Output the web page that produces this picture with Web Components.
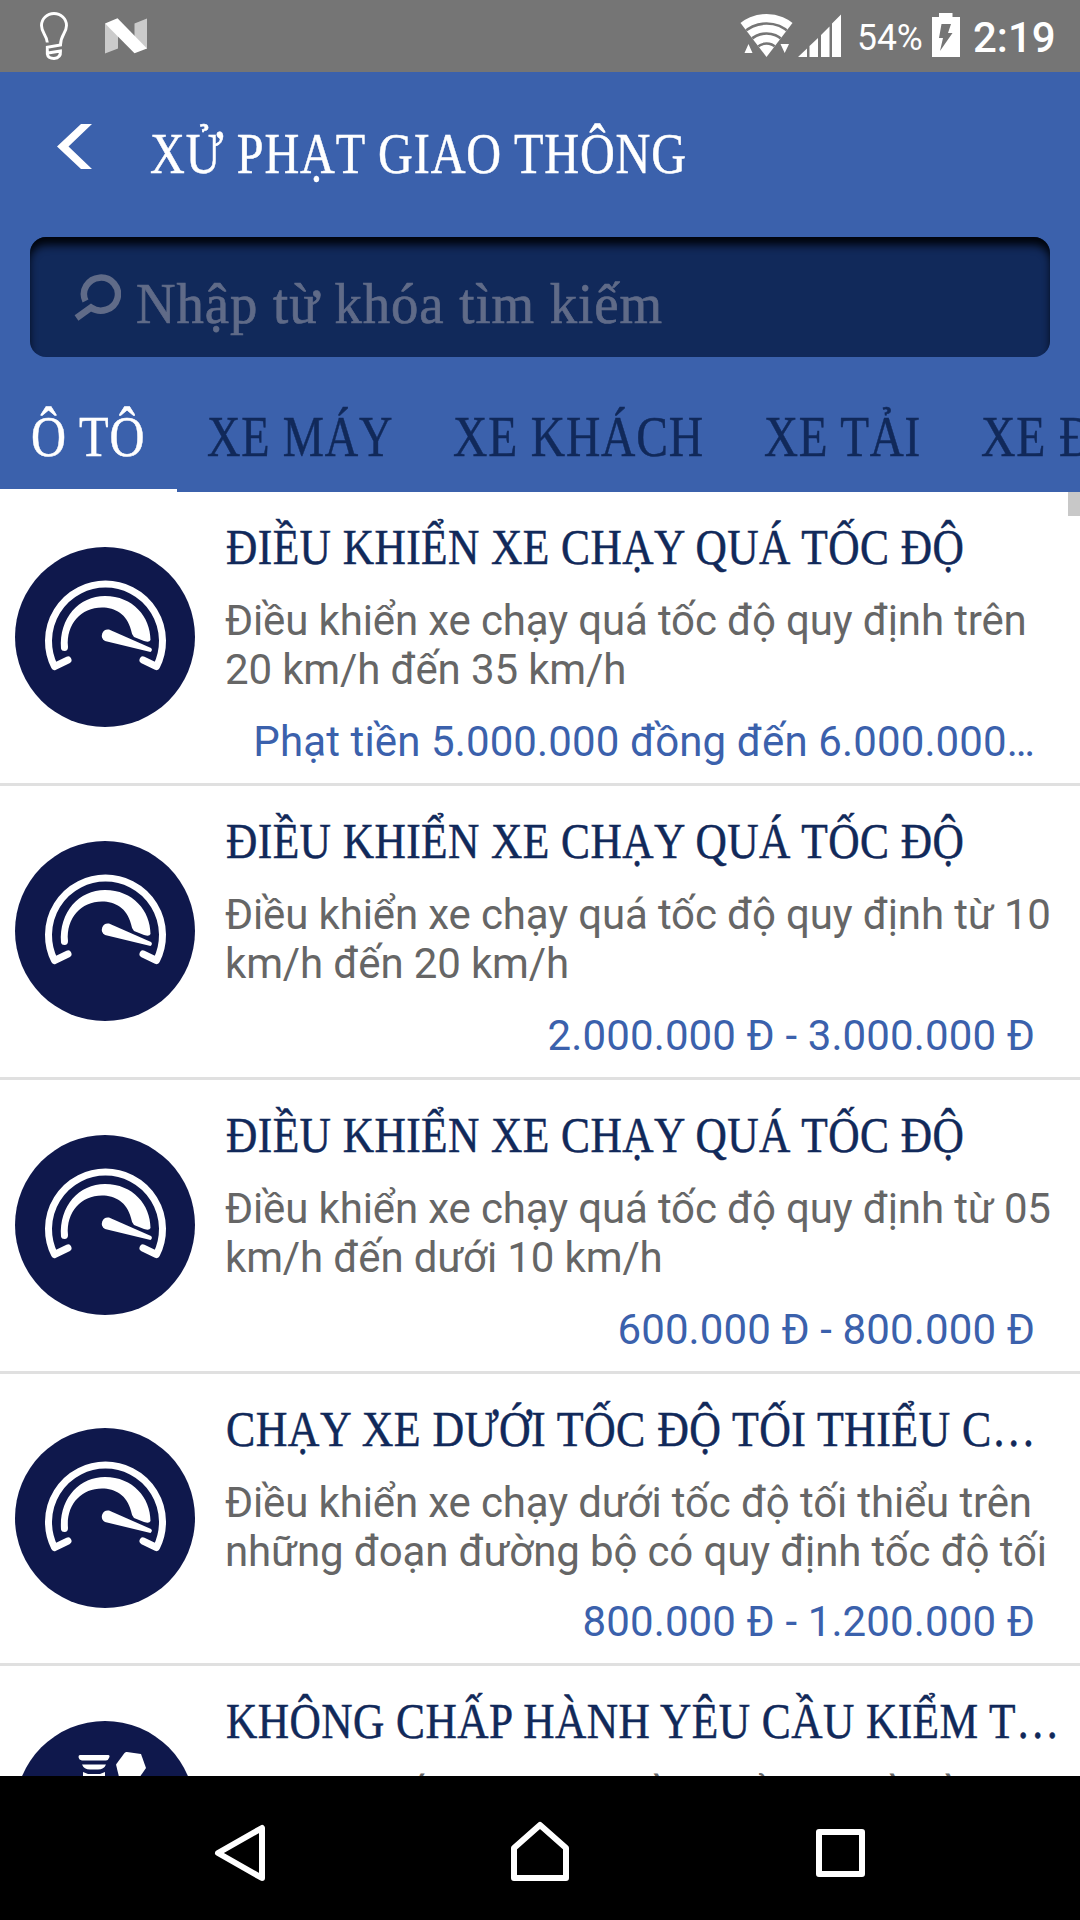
<!DOCTYPE html>
<html lang="vi">
<head>
<meta charset="utf-8">
<title>Xử phạt giao thông</title>
<style>
    body {
        margin: 0;
        background-color: white;
    }
</style>
</head>
<body>
<x-traffic-app></x-traffic-app>

<script>
function makeTemplate(html) {
    const template = document.createElement('template');
    template.innerHTML = html;
    return template;
}

// One line of text squeezed or stretched to the given width
class FitText extends HTMLElement {
    constructor() {
        super();
        this.attachShadow({mode: 'open'});
        this.shadowRoot.appendChild(FitText.template.content.cloneNode(true));
        this._text = this.shadowRoot.querySelector('.text');
        this._text.querySelector('slot').addEventListener('slotchange', () => this.fit());
    }

    static get observedAttributes() {
        return ['width'];
    }

    connectedCallback() {
        this.fit();
    }

    attributeChangedCallback() {
        this.fit();
    }

    fit() {
        const width = parseFloat(this.getAttribute('width'));
        const natural = this._text.offsetWidth;
        if (!width || !natural) {
            return;
        }

        this.style.width = `${width}px`;
        this._text.style.transform = `scaleX(${width / natural})`;
    }
}

FitText.template = makeTemplate(`
<style>
    :host {
        display: block;
        flex: none;
        white-space: nowrap;
    }
    .text {
        display: inline-block;
        vertical-align: top;
        transform-origin: 0 0;
    }
</style>
<span class="text"><slot></slot></span>
`);

window.customElements.define('x-fit-text', FitText);

///////

class StatusBar extends HTMLElement {
    constructor() {
        super();
        this.attachShadow({mode: 'open'});
        this.shadowRoot.appendChild(StatusBar.template.content.cloneNode(true));
    }
}

StatusBar.template = makeTemplate(`
<style>
    :host {
        display: flex;
        height: 72px;
        background-color: #757575;
        color: white;
        font-family: Roboto, sans-serif;
    }
    svg {
        display: block;
        flex: none;
    }
    .spacer {
        flex: 1;
    }
    .percent {
        font-size: 36px;
        line-height: 76px;
        margin-left: 14px;
    }
    .time {
        font-size: 43px;
        font-weight: 500;
        line-height: 74px;
        margin: 0 24px 0 12px;
    }
</style>
<svg width="160" height="72" viewBox="0 0 160 72">
    <path d="M47.3 42.5C46.8 35 41.5 33 41.5 25.5A12.5 12 0 0 1 66.5 25.5C66.5 33 60.5 35 60.5 45L47.3 47.3V54Q48 58.5 54 58.5Q61 58 60.5 51L48 53" fill="none" stroke="white" stroke-width="2.9"/>
    <path d="M105 23.5L118 33V48.5L105 53.5ZM134.5 23.5L147 18.5V49L134.5 38Z" fill="#cbcbcb"/>
    <path d="M105 23.5L117.5 18.2L147 48.5L134.5 53.3Z" fill="white"/>
</svg>
<div class="spacer"></div>
<svg width="104" height="72" viewBox="739 0 104 72">
    <clipPath id="fan"><path d="M766.5 57L739 21V10H794V21Z"/></clipPath>
    <g clip-path="url(#fan)">
        <circle cx="766.5" cy="57" r="43" fill="white"/>
        <g fill="none" stroke="#757575" stroke-width="2.6">
            <circle cx="766.5" cy="57" r="33.5"/>
            <circle cx="766.5" cy="57" r="23.5"/>
            <circle cx="766.5" cy="57" r="13.5"/>
        </g>
    </g>
    <path d="M744.5 53L748.5 44L752.5 53ZM780.5 44H789L784.7 53Z" fill="white"/>
    <path d="M798 57L807 48.5V57ZM809.5 46L818 38V57H809.5ZM821 35L829.5 26.5V57H821ZM832 23.5L841 14.5V57H832Z" fill="white"/>
</svg>
<x-fit-text class="percent" width="66">54%</x-fit-text>
<svg width="38" height="72" viewBox="923 0 38 72">
    <path d="M932 17H939V13H952.5V17H960V57H932Z" fill="white"/>
    <path d="M941.5 24H951L948 33H952.5L940 51L943 38H939Z" fill="#757575"/>
</svg>
<x-fit-text class="time" width="83">2:19</x-fit-text>
`);

window.customElements.define('x-status-bar', StatusBar);

///////

class AppHeader extends HTMLElement {
    constructor() {
        super();
        this.attachShadow({mode: 'open'});
        this.shadowRoot.appendChild(AppHeader.template.content.cloneNode(true));
    }
}

AppHeader.template = makeTemplate(`
<style>
    :host {
        display: block;
        height: 165px;
        color: white;
        font-size: 57px;
        line-height: 60px;
    }
    .bar {
        display: flex;
        gap: 57px;
        padding: 52px 0 0 57px;
    }
    svg {
        display: block;
    }
    x-fit-text {
        letter-spacing: 1px;
        -webkit-text-stroke: 0.5px;
    }
</style>
<div class="bar">
    <svg width="36" height="46" viewBox="0 0 36 46">
        <path d="M24 0H35L11.5 22.5L35 45H24L0 22.5Z" fill="white"/>
    </svg>
    <x-fit-text width="537"><slot></slot></x-fit-text>
</div>
`);

window.customElements.define('x-app-header', AppHeader);

///////

class SearchBox extends HTMLElement {
    constructor() {
        super();
        this.attachShadow({mode: 'open'});
        this.shadowRoot.appendChild(SearchBox.template.content.cloneNode(true));
    }
}

SearchBox.template = makeTemplate(`
<style>
    :host {
        display: flex;
        box-sizing: border-box;
        height: 120px;
        margin: 0 30px;
        padding: 37px 0 0 43px;
        gap: 15px;
        border-radius: 16px;
        background-color: #11295a;
        box-shadow: inset 0 9px 9px -1px #01040b;
        color: #606b88;
        font-size: 57px;
        line-height: 60px;
    }
    svg {
        display: block;
    }
    x-fit-text {
        letter-spacing: 1px;
        -webkit-text-stroke: 0.7px;
    }
</style>
<svg width="48" height="48" viewBox="0 0 48 48">
    <path d="M12.5 27A17 16.5 0 1 1 18 33.5L3.5 44" fill="none" stroke="currentColor" stroke-width="6.500"/>
</svg>
<x-fit-text width="527"><slot></slot></x-fit-text>
`);

window.customElements.define('x-search-box', SearchBox);

///////

class TabItem extends HTMLElement {
    constructor() {
        super();
        this.attachShadow({mode: 'open'});
        this.shadowRoot.appendChild(TabItem.template.content.cloneNode(true));
    }

    connectedCallback() {
        this.shadowRoot.querySelector('x-fit-text').setAttribute('width', this.getAttribute('width'));
    }
}

TabItem.template = makeTemplate(`
<style>
    :host {
        display: block;
        flex: none;
        box-sizing: border-box;
        height: 135px;
        padding: 50px 30px 0;
        color: #11295a;
        font-size: 57px;
        line-height: 60px;
    }
    :host([selected]) {
        padding: 50px 32px 0 31px;
        border-bottom: 3px solid white;
        color: white;
    }
    x-fit-text {
        letter-spacing: 1px;
        -webkit-text-stroke: 0.5px;
    }
</style>
<x-fit-text><slot></slot></x-fit-text>
`);

window.customElements.define('x-tab-item', TabItem);

///////

class FineItem extends HTMLElement {
    constructor() {
        super();
        this.attachShadow({mode: 'open'});
        this.shadowRoot.appendChild(FineItem.template.content.cloneNode(true));
    }

    connectedCallback() {
        this.shadowRoot.querySelector('.title').setAttribute('width', this.getAttribute('title-width'));
        this.shadowRoot.querySelector('.glyph').innerHTML = FineItem.icons[this.getAttribute('icon')];
    }
}

FineItem.icons = {
    speed: `
        <path d="M39.5 119.5A57 57 0 1 1 141.5 119.5L128 113M39.5 119.5L53 113" fill="none" stroke="white" stroke-width="7" stroke-linecap="round" stroke-linejoin="round"/>
        <path d="M46 101.5C44 71 64 49 90 49C118 49 135.5 70 135.5 93Q134.5 96 129 94L119 90Q116.5 87 116 83C112 67 100 60.5 87 60.5C66 60.5 51 77 53 100Q53 104 49.5 104Q46.5 104 46 101.5Z" fill="white"/>
        <path d="M94 82.5L136 101Q138 103 135.5 105L90 94A6.2 6.2 0 0 1 94 82.5Z" fill="white"/>`,
    check: `
        <path d="M65 34H93Q95.5 34 94 37Q93 39.5 91 39.5H67Q64 39 63.5 36Q63.5 34 65 34ZM67 43.5H91Q89 48.5 83 48.5H75Q69 48.5 67 43.5ZM68 51L73 53H85L90 51V60H68Z" fill="white"/>
        <path d="M111 31H112L126 33L131 47L122 60H105L101 43.5L109.5 32Z" fill="white"/>`
};

FineItem.template = makeTemplate(`
<style>
    :host {
        display: flex;
        flex: none;
        box-sizing: border-box;
        height: 294px;
        border-bottom: 3px solid #e0e0e0;
        padding: 25px 0 0 15px;
        gap: 30px;
    }
    .icon {
        display: block;
        flex: none;
        margin-top: 30px;
    }
    .body {
        width: 825px;
    }
    .title {
        color: #11295a;
        font-size: 51px;
        letter-spacing: 0.5px;
        line-height: 60px;
        margin-left: 1px;
        -webkit-text-stroke: 0.5px;
    }
    .desc {
        margin-top: 19px;
        height: 98px;
        color: #666;
        font: 42px/49px Roboto, sans-serif;
        letter-spacing: -0.14px;
        white-space: nowrap;
    }
    .fine {
        margin: 23px 15px 0 0;
        color: #3b61ac;
        font: 42px/49px Roboto, sans-serif;
        letter-spacing: 0.12px;
        text-align: right;
        white-space: nowrap;
    }
    :host([compact]) {
        height: 292px;
    }
    :host([compact]) .icon {
        margin-top: 29px;
    }
    :host([compact]) .fine {
        margin-top: 21px;
    }
</style>
<svg class="icon" width="180" height="180" viewBox="0 0 180 180">
    <circle cx="90" cy="90" r="90" fill="#0f184c"/>
    <g class="glyph"></g>
</svg>
<div class="body">
    <x-fit-text class="title"><slot name="title"></slot></x-fit-text>
    <div class="desc"><slot name="desc"></slot></div>
    <div class="fine"><slot name="fine"></slot></div>
</div>
`);

window.customElements.define('x-fine-item', FineItem);

///////

class NavBar extends HTMLElement {
    constructor() {
        super();
        this.attachShadow({mode: 'open'});
        this.shadowRoot.appendChild(NavBar.template.content.cloneNode(true));
    }
}

NavBar.template = makeTemplate(`
<style>
    :host {
        display: flex;
        align-items: center;
        justify-content: center;
        gap: 240px;
        flex: none;
        height: 144px;
        background-color: black;
    }
    svg {
        fill: none;
        stroke: white;
        stroke-width: 6;
        stroke-linejoin: round;
    }
</style>
<svg width="60" height="70" viewBox="210 1813 60 70"><path d="M262 1828V1878L218 1853Z"/></svg>
<svg width="60" height="70" viewBox="510 1813 60 70"><path d="M514 1878V1848L540 1825L566 1848V1878Z"/></svg>
<svg width="60" height="70" viewBox="810 1813 60 70"><path d="M819 1832H862V1874H819Z"/></svg>
`);

window.customElements.define('x-nav-bar', NavBar);

///////

class TrafficApp extends HTMLElement {
    constructor() {
        super();
        this.attachShadow({mode: 'open'});
        this.shadowRoot.appendChild(TrafficApp.template.content.cloneNode(true));
    }

    connectedCallback() {
        const tabs = this.shadowRoot.querySelector('.tabs');
        tabs.innerHTML = TrafficApp.tabs.map(([label, width], index) =>
            `<x-tab-item width="${width}" ${index === 0 ? 'selected' : ''}>${label}</x-tab-item>`
        ).join('');

        const items = this.shadowRoot.querySelector('.items');
        items.innerHTML = TrafficApp.fines.map((fine) => `
            <x-fine-item icon="${fine.icon || 'speed'}" title-width="${fine.width}" ${fine.compact ? 'compact' : ''}>
                <span slot="title">${fine.title}</span>
                <span slot="desc">${fine.desc}</span>
                <span slot="fine">${fine.fine}</span>
            </x-fine-item>`
        ).join('');
    }
}

TrafficApp.tabs = [
    ['Ô TÔ', 114],
    ['XE MÁY', 186],
    ['XE KHÁCH', 251],
    ['XE TẢI', 157],
    ['XE Đ', 113]
];

TrafficApp.fines = [
    {
        title: 'ĐIỀU KHIỂN XE CHẠY QUÁ TỐC ĐỘ',
        width: 738,
        desc: 'Điều khiển xe chạy quá tốc độ quy định trên<br>20 km/h đến 35 km/h',
        fine: 'Phạt tiền 5.000.000 đồng đến 6.000.000…'
    },
    {
        title: 'ĐIỀU KHIỂN XE CHẠY QUÁ TỐC ĐỘ',
        width: 738,
        desc: 'Điều khiển xe chạy quá tốc độ quy định từ 10<br>km/h đến 20 km/h',
        fine: '2.000.000 Đ - 3.000.000 Đ'
    },
    {
        title: 'ĐIỀU KHIỂN XE CHẠY QUÁ TỐC ĐỘ',
        width: 738,
        desc: 'Điều khiển xe chạy quá tốc độ quy định từ 05<br>km/h đến dưới 10 km/h',
        fine: '600.000 Đ - 800.000 Đ'
    },
    {
        compact: true,
        title: 'CHẠY XE DƯỚI TỐC ĐỘ TỐI THIỂU C…',
        width: 810,
        desc: 'Điều khiển xe chạy dưới tốc độ tối thiểu trên<br>những đoạn đường bộ có quy định tốc độ tối',
        fine: '800.000 Đ - 1.200.000 Đ'
    },
    {
        icon: 'check',
        title: 'KHÔNG CHẤP HÀNH YÊU CẦU KIỂM T…',
        width: 834,
        desc: 'Không chấp hành yêu cầu kiểm tra về nồng',
        fine: ''
    }
];

TrafficApp.template = makeTemplate(`
<style>
    :host {
        display: flex;
        flex-direction: column;
        width: 1080px;
        height: 1920px;
        overflow: hidden;
        font-family: "Liberation Serif", serif;
    }
    .top {
        flex: none;
        background-color: #3b61ac;
    }
    .tabs {
        display: flex;
        overflow: hidden;
    }
    .list {
        position: relative;
        flex: 1;
        min-height: 0;
        overflow: hidden;
    }
    .scrollThumb {
        position: absolute;
        top: 0;
        right: 0;
        width: 12px;
        height: 24px;
        background-color: #c8c8c8;
    }
</style>
<x-status-bar></x-status-bar>
<div class="top">
    <x-app-header>XỬ PHẠT GIAO THÔNG</x-app-header>
    <x-search-box>Nhập từ khóa tìm kiếm</x-search-box>
    <div class="tabs"></div>
</div>
<div class="list">
    <div class="items"></div>
    <div class="scrollThumb"></div>
</div>
<x-nav-bar></x-nav-bar>
`);

window.customElements.define('x-traffic-app', TrafficApp);
</script>
</body>
</html>
